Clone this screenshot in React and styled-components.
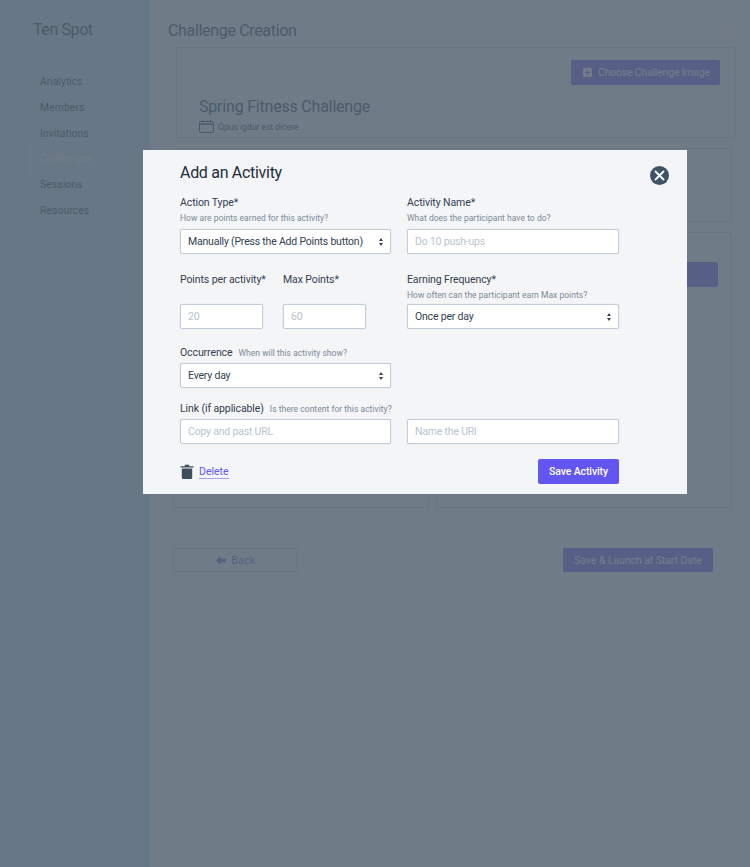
import React from 'react'
import styled, { createGlobalStyle } from 'styled-components'

const GlobalStyle = createGlobalStyle`
html, body {
    margin: 0;
    padding: 0;
    background: #f7f9fb;
    font-family: Roboto, "Liberation Sans", sans-serif;
}
* {
    box-sizing: border-box;
}
`
const Page = styled.div`
position: relative;
display: flex;
width: 750px;
height: 867px;
overflow: hidden;
background: #f7f9fb;
`
const Sidebar = styled.aside`
width: 150px;
flex-shrink: 0;
padding-top: 20px;
background: #c8dfee;
`
const Logo = styled.div`
margin-left: 33px;
font-size: 16px;
line-height: 20px;
letter-spacing: -0.4px;
color: #233843;
`
const SideNav = styled.nav`
display: flex;
flex-direction: column;
margin-top: 29px;
`
const SideLink = styled.a`
display: block;
height: 25.8px;
line-height: 25.8px;
padding-left: ${props => props.$active ? '9px' : '10px'};
margin-left: 30px;
font-size: 10.5px;
letter-spacing: 0;
color: ${props => props.$active ? '#ffffff' : '#233843'};
border-left: ${props => props.$active ? '1px solid #ffffff' : 'none'};
`
const Main = styled.main`
flex: 1;
display: flex;
flex-direction: column;
padding: 0 15px 0 26px;
`
const Header = styled.header`
display: flex;
justify-content: space-between;
align-items: center;
height: 47px;
padding-top: 13px;
margin-left: -8px;
margin-right: -1px;
`
const PageTitle = styled.h1`
margin: 0;
font-size: 16px;
font-weight: 400;
letter-spacing: -0.33px;
color: #233843;
`
const Avatar = styled.div`
display: flex;
align-items: center;
justify-content: center;
width: 24px;
height: 24px;
border-radius: 50%;
border: 1px solid #ffffff;
color: #ffffff;
`
const Card = styled.section`
border: 1px solid #c2d0d8;
`
const ImageCard = styled(Card)`
height: 91px;
padding: 12px 14px 0 22px;
`
const ChooseButton = styled.div`
display: flex;
align-items: center;
width: 149px;
height: 25px;
margin-left: auto;
padding-left: 12px;
gap: 6px;
background: #6355f0;
border-radius: 2px;
font-size: 10.5px;
letter-spacing: -0.2px;
color: #ffffff;
white-space: nowrap;
`
const ChallengeName = styled.h2`
margin: 12px 0 0;
font-size: 16px;
line-height: 20px;
font-weight: 400;
letter-spacing: -0.2px;
color: #233843;
`
const DateRow = styled.div`
display: flex;
align-items: center;
gap: 4px;
margin-top: 3px;
font-size: 9px;
letter-spacing: -0.2px;
color: #233843;
`
const DetailCard = styled(Card)`
height: 74px;
margin: 10px 3px 0 0;
`
const Columns = styled.div`
display: grid;
grid-template-columns: 256px 296px;
gap: 7px;
margin: 10px 3px 0 -3px;
`
const TallCard = styled(Card)`
height: 276px;
padding: 29px 13px 0;
`
const WideButton = styled.div`
height: 25px;
width: 200px;
margin-left: auto;
background: #6355f0;
border-radius: 2px;
`
const BottomBar = styled.div`
display: flex;
justify-content: space-between;
margin: 40px 22px 0 -3px;
`
const BackButton = styled.div`
display: flex;
align-items: center;
justify-content: center;
gap: 6px;
width: 125px;
height: 24px;
border: 1px solid #c2d0d8;
border-radius: 2px;
font-size: 10.5px;
letter-spacing: 0.2px;
color: #6355f0;
`
const LaunchButton = styled.div`
display: flex;
align-items: center;
justify-content: center;
width: 150px;
height: 24px;
background: #6355f0;
border-radius: 2px;
font-size: 10.5px;
letter-spacing: -0.08px;
color: #ffffff;
`
const Overlay = styled.div`
position: absolute;
inset: 0;
background: rgba(84, 97, 112, 0.83);
`
const Modal = styled.div`
position: absolute;
top: 150px;
left: 143px;
width: 544px;
height: 344px;
padding: 12px 68px 0 37px;
background: #f3f5f7;
`
const CloseButton = styled.button`
position: absolute;
top: 16px;
right: 18px;
display: flex;
align-items: center;
justify-content: center;
width: 19px;
height: 19px;
padding: 0;
border: none;
border-radius: 50%;
background: #3f5367;
`
const ModalTitle = styled.h2`
margin: 0;
font-size: 16px;
line-height: 21px;
font-weight: 400;
letter-spacing: -0.3px;
color: #1f2d3d;
`
const FormGrid = styled.div`
display: grid;
grid-template-columns: 211px 212px;
column-gap: 16px;
margin-top: 13px;
`
const Field = styled.div`
display: flex;
flex-direction: column;
min-height: ${props => props.$height || 'auto'};
`
const PointsPair = styled.div`
display: grid;
grid-template-columns: 83px 83px;
column-gap: 20px;
`
const Label = styled.label`
display: block;
height: 14px;
line-height: 14px;
font-size: 10.5px;
letter-spacing: -0.1px;
color: #33404f;
white-space: nowrap;
`
const Hint = styled.span`
display: block;
height: 12px;
margin: ${props => props.$inline ? '0' : '2px 0 0'};
line-height: 12px;
font-size: 8.5px;
letter-spacing: 0.03px;
color: #7d8a97;
white-space: nowrap;
`
const LabelRow = styled.div`
display: flex;
align-items: center;
gap: ${props => props.$gap || '6px'};
`
const ControlWrap = styled.div`
position: relative;
margin-top: ${props => props.$top || '0'};
`
const control = `
display: block;
width: 100%;
height: 25px;
padding: 0 7px;
background: #ffffff;
border: 1px solid #c3cdd8;
box-shadow: 0 0 1px #c3cdd8;
border-radius: 2px;
font-family: Roboto, "Liberation Sans", sans-serif;
font-size: 10.5px;
letter-spacing: -0.2px;
color: #33404f;
outline: none;
`
const TextInput = styled.input`
${control}
&::placeholder {
    color: #b9c4cf;
    opacity: 1;
}
`
const Select = styled.select`
${control}
appearance: none;
`
const Caret = styled.svg`
position: absolute;
top: 8.5px;
right: 8px;
pointer-events: none;
`
const Footer = styled.div`
display: flex;
justify-content: space-between;
align-items: center;
margin-top: 15px;
`
const DeleteWrap = styled.div`
display: flex;
align-items: center;
gap: 5px;
`
const DeleteLink = styled.a`
font-size: 10.5px;
line-height: 13px;
letter-spacing: 0;
color: #6355f0;
border-bottom: 1px solid #a79ff5;
`
const SaveButton = styled.button`
width: 81px;
height: 25px;
padding: 0;
border: none;
border-radius: 2px;
background: #6355f0;
font-family: Roboto, "Liberation Sans", sans-serif;
font-size: 10.5px;
font-weight: 500;
letter-spacing: -0.1px;
color: #ffffff;
`

const SelectField = ({ value, top }) => (
    <ControlWrap $top={top}>
        <Select defaultValue={value}>
            <option>{value}</option>
        </Select>
        <Caret width="4" height="8" viewBox="0 0 4 8">
            <path d="M2 0 L4 3 H0 Z M2 8 L0 5 H4 Z" fill="#33404f" />
        </Caret>
    </ControlWrap>
)

const links = ['Analytics', 'Members', 'Invitations', 'Challenges', 'Sessions', 'Resources']

const App = () => {
    return (
        <>
        <GlobalStyle />
        <Page>
            <Sidebar>
                <Logo>Ten Spot</Logo>
                <SideNav>
                    {links.map(l => <SideLink key={l} $active={l === 'Challenges'}>{l}</SideLink>)}
                </SideNav>
            </Sidebar>
            <Main>
                <Header>
                    <PageTitle>Challenge Creation</PageTitle>
                    <Avatar>
                        <svg width="10" height="10" viewBox="0 0 10 10" fill="currentColor">
                            <circle cx="5" cy="2.8" r="2.3" />
                            <path d="M1 10 V8.2 C1 6.8 3 6.3 5 6.3 C7 6.3 9 6.8 9 8.2 V10 Z" />
                        </svg>
                    </Avatar>
                </Header>
                <ImageCard>
                    <ChooseButton>
                        <svg width="9" height="9" viewBox="0 0 9 9">
                            <rect width="9" height="9" rx="1" fill="#ffffff" />
                            <path d="M4.5 2 V7 M2 4.5 H7" stroke="#6355f0" strokeWidth="1.2" />
                        </svg>
                        Choose Challenge Image
                    </ChooseButton>
                    <ChallengeName>Spring Fitness Challenge</ChallengeName>
                    <DateRow>
                        <svg width="15" height="13" viewBox="0 0 15 13" fill="none" stroke="#233843">
                            <rect x="0.5" y="1.5" width="14" height="11" rx="1" />
                            <path d="M0.5 4 H14.5" strokeWidth="1.5" />
                            <path d="M3.5 0 V2 M11.5 0 V2" />
                        </svg>
                        Opus igitur est dicere
                    </DateRow>
                </ImageCard>
                <DetailCard />
                <Columns>
                    <TallCard />
                    <TallCard><WideButton /></TallCard>
                </Columns>
                <BottomBar>
                    <BackButton>
                        <svg width="10" height="9" viewBox="0 0 10 9" fill="#6355f0">
                            <path d="M0 4.5 L4.5 0 V2.7 H10 V6.3 H4.5 V9 Z" />
                        </svg>
                        Back
                    </BackButton>
                    <LaunchButton>Save &amp; Launch at Start Date</LaunchButton>
                </BottomBar>
            </Main>
            <Overlay />
            <Modal>
                <CloseButton aria-label="Close">
                    <svg width="11" height="11" viewBox="0 0 11 11" stroke="#ffffff" strokeWidth="1.8" strokeLinecap="round">
                        <path d="M1.5 1.5 L9.5 9.5 M9.5 1.5 L1.5 9.5" />
                    </svg>
                </CloseButton>
                <ModalTitle>Add an Activity</ModalTitle>
                <FormGrid>
                    <Field $height="77px">
                        <Label>Action Type*</Label>
                        <Hint>How are points earned for this activity?</Hint>
                        <SelectField value="Manually (Press the Add Points button)" top="5px" />
                    </Field>
                    <Field $height="77px">
                        <Label>Activity Name*</Label>
                        <Hint>What does the participant have to do?</Hint>
                        <ControlWrap $top="5px"><TextInput placeholder="Do 10 push-ups" /></ControlWrap>
                    </Field>
                    <PointsPair>
                        <Field $height="73px">
                            <Label>Points per activity*</Label>
                            <ControlWrap $top="17px"><TextInput placeholder="20" /></ControlWrap>
                        </Field>
                        <Field>
                            <Label>Max Points*</Label>
                            <ControlWrap $top="17px"><TextInput placeholder="60" /></ControlWrap>
                        </Field>
                    </PointsPair>
                    <Field $height="73px">
                        <Label>Earning Frequency*</Label>
                        <Hint>How often can the participant earn Max points?</Hint>
                        <SelectField value="Once per day" top="3px" />
                    </Field>
                    <Field $height="56px">
                        <LabelRow>
                            <Label>Occurrence</Label>
                            <Hint $inline>When will this activity show?</Hint>
                        </LabelRow>
                        <SelectField value="Every day" top="3px" />
                    </Field>
                    <div />
                    <Field>
                        <LabelRow>
                            <Label>Link (if applicable)</Label>
                            <Hint $inline>Is there content for this activity?</Hint>
                        </LabelRow>
                        <ControlWrap $top="3px"><TextInput placeholder="Copy and past URL" /></ControlWrap>
                    </Field>
                    <Field>
                        <ControlWrap $top="17px"><TextInput placeholder="Name the URl" /></ControlWrap>
                    </Field>
                </FormGrid>
                <Footer>
                    <DeleteWrap>
                        <svg width="14" height="15" viewBox="0 0 14 15" fill="#3f4d5d">
                            <path d="M0.5 2.2 H4.8 V0.8 H9.2 V2.2 H13.5 V3.6 H0.5 Z" />
                            <path d="M1.8 4.6 H12.2 V13.5 C12.2 14.4 11.6 15 10.8 15 H3.2 C2.4 15 1.8 14.4 1.8 13.5 Z" />
                        </svg>
                        <DeleteLink>Delete</DeleteLink>
                    </DeleteWrap>
                    <SaveButton>Save Activity</SaveButton>
                </Footer>
            </Modal>
        </Page>
        </>
    )
}

export default App
